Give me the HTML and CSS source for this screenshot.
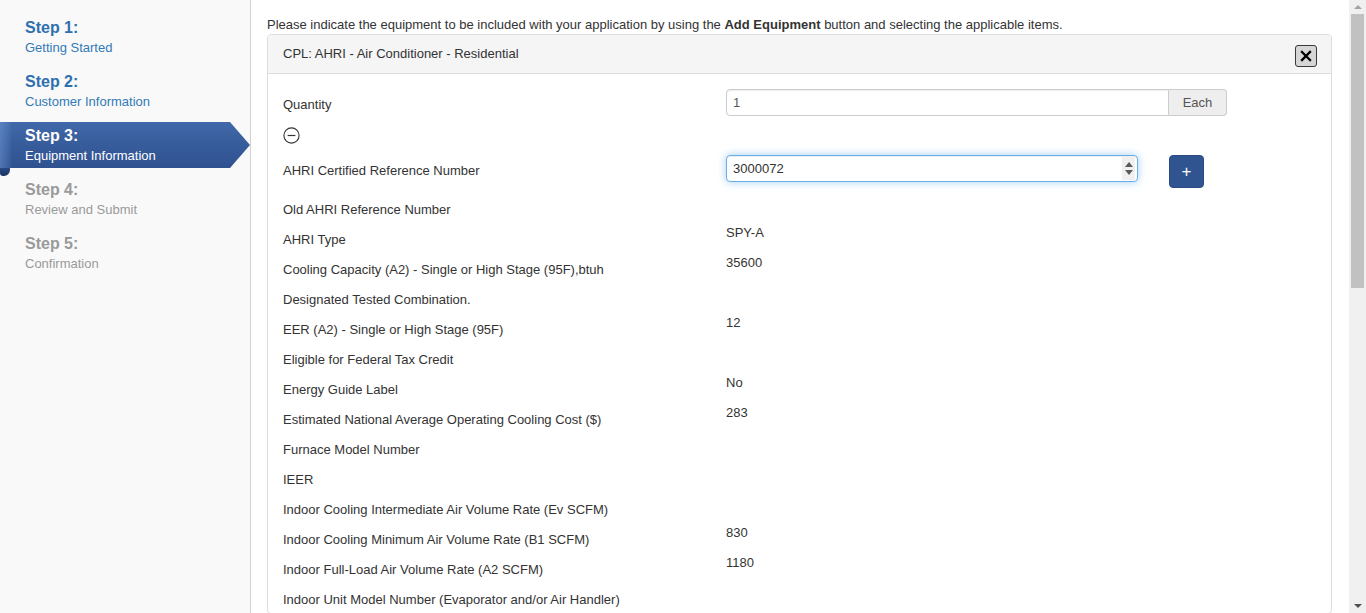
FILE: index.html
```html
<!DOCTYPE html>
<html lang="en">
<head>
<meta charset="utf-8">
<title>Equipment Information</title>
<link rel="stylesheet" href="styles.css">
</head>
<body>
<div class="app">
  <nav class="sidebar">
    <div class="step done"><div class="step-title">Step 1:</div><div class="step-sub">Getting Started</div></div>
    <div class="step done"><div class="step-title">Step 2:</div><div class="step-sub">Customer Information</div></div>
    <div class="step active"><div class="step-title">Step 3:</div><div class="step-sub">Equipment Information</div></div>
    <div class="step todo"><div class="step-title">Step 4:</div><div class="step-sub">Review and Submit</div></div>
    <div class="step todo"><div class="step-title">Step 5:</div><div class="step-sub">Confirmation</div></div>
  </nav>

  <main class="main">
    <p class="intro">Please indicate the equipment to be included with your application by using the <b>Add Equipment</b> button and selecting the applicable items.</p>

    <section class="panel">
      <header class="panel-head">
        <span class="panel-title">CPL: AHRI - Air Conditioner - Residential</span>
        <button class="close" type="button" aria-label="Close">
          <svg width="12" height="12" viewBox="0 0 12 12"><path d="M2 2 L10 10 M10 2 L2 10" stroke="#000" stroke-width="2.3" stroke-linecap="square" fill="none"/></svg>
        </button>
      </header>

      <div class="panel-body">
        <div class="row row-qty">
          <label class="row-label">Quantity</label>
          <div class="input-group">
            <div class="input">1</div>
            <div class="addon">Each</div>
          </div>
        </div>

        <div class="toggle-row">
          <svg width="17" height="17" viewBox="0 0 17 17"><circle cx="8.5" cy="8.5" r="7.6" fill="none" stroke="#333" stroke-width="1.1"/><path d="M4.6 8.5 H12.4" stroke="#333" stroke-width="1.2"/></svg>
        </div>

        <div class="row row-ref">
          <label class="row-label">AHRI Certified Reference Number</label>
          <div class="ref-controls">
            <div class="input focus"><span>3000072</span><span class="spinner"><i class="sp-up"></i><i class="sp-down"></i></span></div>
            <button class="btn-add" type="button">+</button>
          </div>
        </div>

        <div class="details">
          <div class="detail"><span class="dt">Old AHRI Reference Number</span><span class="dd"></span></div>
          <div class="detail"><span class="dt">AHRI Type</span><span class="dd">SPY-A</span></div>
          <div class="detail"><span class="dt">Cooling Capacity (A2) - Single or High Stage (95F),btuh</span><span class="dd">35600</span></div>
          <div class="detail"><span class="dt">Designated Tested Combination.</span><span class="dd"></span></div>
          <div class="detail"><span class="dt">EER (A2) - Single or High Stage (95F)</span><span class="dd">12</span></div>
          <div class="detail"><span class="dt">Eligible for Federal Tax Credit</span><span class="dd"></span></div>
          <div class="detail"><span class="dt">Energy Guide Label</span><span class="dd">No</span></div>
          <div class="detail"><span class="dt">Estimated National Average Operating Cooling Cost ($)</span><span class="dd">283</span></div>
          <div class="detail"><span class="dt">Furnace Model Number</span><span class="dd"></span></div>
          <div class="detail"><span class="dt">IEER</span><span class="dd"></span></div>
          <div class="detail"><span class="dt">Indoor Cooling Intermediate Air Volume Rate (Ev SCFM)</span><span class="dd"></span></div>
          <div class="detail"><span class="dt">Indoor Cooling Minimum Air Volume Rate (B1 SCFM)</span><span class="dd">830</span></div>
          <div class="detail"><span class="dt">Indoor Full-Load Air Volume Rate (A2 SCFM)</span><span class="dd">1180</span></div>
          <div class="detail"><span class="dt">Indoor Unit Model Number (Evaporator and/or Air Handler)</span><span class="dd"></span></div>
        </div>
      </div>
    </section>
  </main>

  <div class="scrollbar" aria-hidden="true">
    <div class="sb-btn"><i class="sb-up"></i></div>
    <div class="sb-thumb"></div>
    <div class="sb-track"></div>
    <div class="sb-btn"><i class="sb-down"></i></div>
  </div>
</div>
</body>
</html>
```

FILE: styles.css
```css
* { box-sizing: border-box; }

html, body {
  margin: 0;
  height: 100%;
  overflow: hidden;
}

body {
  font-family: "Liberation Sans", Arial, Helvetica, sans-serif;
  font-size: 13px;
  line-height: 19px;
  color: #333;
  background: #fff;
}

.app {
  display: flex;
  height: 100vh;
  overflow: hidden;
}

/* ---------- Sidebar ---------- */
.sidebar {
  flex: none;
  width: 251px;
  background: #f9f9f9;
  border-right: 1px solid #d3d3d3;
  padding-top: 14px;
  display: flex;
  flex-direction: column;
  gap: 8px;
}

.step {
  position: relative;
  z-index: 0;
  height: 46px;
  padding: 4px 0 2px 25px;
}

.step-title {
  font-size: 16px;
  font-weight: bold;
  line-height: 20px;
}

.step-sub {
  line-height: 20px;
}

.step.done { color: #337ab7; }
.step.done .step-title { color: #2e70ae; }
.step.todo { color: #999; }
.step.todo .step-title { color: #9a9a9a; }

.step.active { color: #fff; }

.step.active::before {
  content: "";
  position: absolute;
  inset: 0;
  z-index: -1;
  background:
    linear-gradient(to right, rgba(120,160,220,.45) 0, rgba(120,160,220,.15) 9px, rgba(0,0,0,0) 12px),
    linear-gradient(to bottom, #4169a9 0, #385d9d 45%, #2f5190 100%);
  clip-path: polygon(0 0, 230px 0, 250px 50%, 230px 100%, 0 100%);
}

.step.active::after {
  content: "";
  position: absolute;
  left: 0;
  top: 100%;
  width: 10px;
  height: 8px;
  background: linear-gradient(to bottom, #2a4a86, #1b3463);
  border-bottom-left-radius: 3px;
  border-bottom-right-radius: 6px;
}

/* ---------- Main ---------- */
.main {
  flex: 1;
  min-width: 0;
  padding: 15px 17px 0 16px;
  overflow: hidden;
}

.intro {
  margin: 0;
  line-height: 19px;
}

.panel {
  border: 1px solid #ddd;
  border-radius: 4px;
  background: #fff;
}

.panel-head {
  height: 39px;
  background: #f5f5f5;
  border-bottom: 1px solid #ddd;
  border-radius: 3px 3px 0 0;
  display: flex;
  align-items: center;
  justify-content: space-between;
  padding: 0 14px 2px 15px;
}

.panel-title { color: #333; }

.close {
  width: 22px;
  height: 22px;
  margin-top: 6px;
  padding: 0;
  border: 1px solid #3a3a3a;
  border-radius: 3px;
  background: #d6d6d6;
  display: flex;
  align-items: center;
  justify-content: center;
  cursor: pointer;
}

.panel-body {
  padding: 15px 15px 0 15px;
}

.row {
  display: grid;
  grid-template-columns: 443px 1fr;
}

.row-label {
  font-weight: normal;
  color: #333;
}

.row-qty { height: 27px; }
.row-qty .row-label { align-self: center; padding-top: 3px; }

.input-group {
  display: flex;
  width: 501px;
  height: 27px;
}

.input {
  display: flex;
  align-items: center;
  height: 27px;
  padding: 0 6px;
  border: 1px solid #ccc;
  border-radius: 4px;
  color: #555;
  background: #fff;
  box-shadow: inset 0 1px 1px rgba(0,0,0,.075);
}

.input-group .input {
  flex: 1;
  border-radius: 4px 0 0 4px;
}

.addon {
  width: 58px;
  height: 27px;
  line-height: 25px;
  text-align: center;
  color: #555;
  background: #eee;
  border: 1px solid #ccc;
  border-left: none;
  border-radius: 0 4px 4px 0;
}

.toggle-row {
  margin-top: 11px;
  height: 17px;
  display: flex;
}

.row-ref {
  margin-top: 11px;
  height: 33px;
}

.row-ref .row-label {
  line-height: 27px;
  padding-top: 2px;
}

.ref-controls {
  display: flex;
  align-items: flex-start;
  gap: 31px;
}

.input.focus {
  width: 412px;
  border-color: #66afe9;
  box-shadow: inset 0 1px 1px rgba(0,0,0,.075), 0 0 8px rgba(102,175,233,.6);
  color: #333;
  padding-right: 2px;
}

.spinner {
  margin-left: auto;
  width: 13px;
  height: 23px;
  background: #f0f0f0;
  display: flex;
  flex-direction: column;
  align-items: center;
  justify-content: center;
  gap: 3px;
}

.sp-up, .sp-down {
  width: 0;
  height: 0;
  border-left: 4px solid transparent;
  border-right: 4px solid transparent;
}
.sp-up { border-bottom: 5px solid #5a5a5a; }
.sp-down { border-top: 5px solid #5a5a5a; }

.btn-add {
  width: 35px;
  height: 33px;
  padding: 0;
  border: 1px solid #2b4c86;
  border-radius: 4px;
  background: #30548f;
  color: #fff;
  font-family: "Liberation Sans", Arial, sans-serif;
  font-size: 17px;
  line-height: 31px;
  cursor: pointer;
}

.details {
  margin-top: 5px;
}

.detail {
  display: grid;
  grid-template-columns: 443px 1fr;
  height: 30px;
}

.dt { padding-top: 7px; }
.dd { padding-top: 0; color: #333; }

/* ---------- Scrollbar ---------- */
.scrollbar {
  flex: none;
  width: 17px;
  background: #f0f0f0;
  display: flex;
  flex-direction: column;
  align-items: center;
}

.sb-btn {
  height: 14px;
  width: 100%;
  display: flex;
  align-items: center;
  justify-content: center;
}

.sb-thumb {
  width: 13px;
  height: 274px;
  background: #c1c1c1;
}

.sb-track { flex: 1; }

.sb-up, .sb-down {
  width: 0;
  height: 0;
  border-left: 4px solid transparent;
  border-right: 4px solid transparent;
}
.sb-up { border-bottom: 4px solid #a3a3a3; }
.sb-down { border-top: 4px solid #505050; }
```
